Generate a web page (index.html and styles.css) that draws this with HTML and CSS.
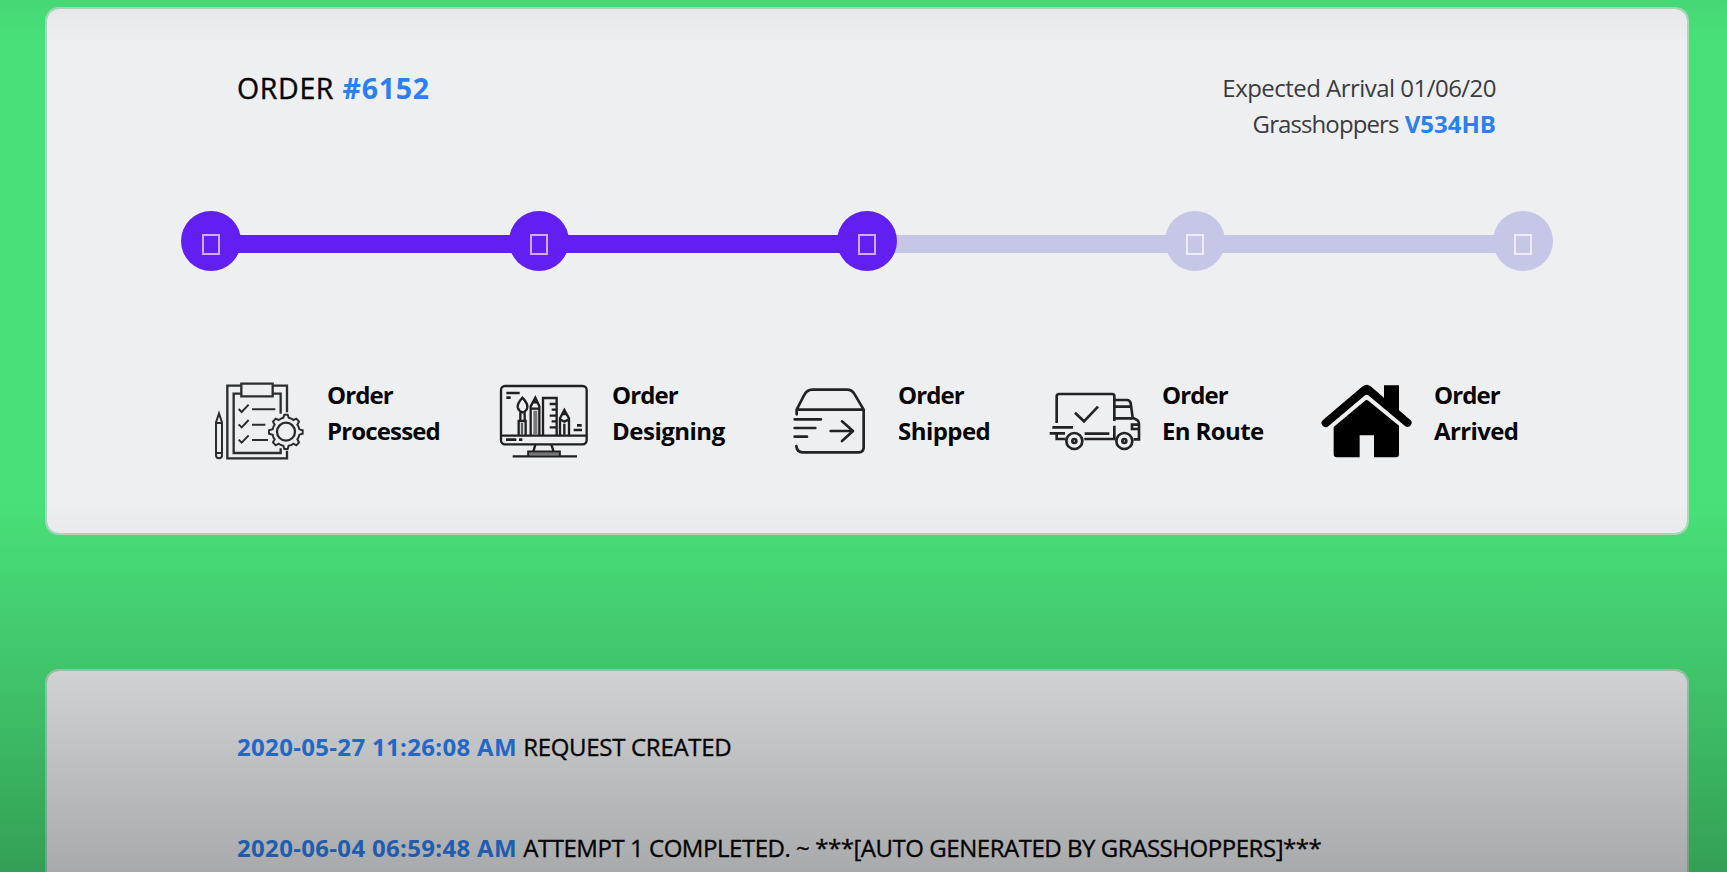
FILE: index.html
```html
<!DOCTYPE html>
<html lang="en">
<head>
<meta charset="utf-8">
<title>Order #6152</title>
<link rel="stylesheet" href="styles.css">
</head>
<body>
<main class="page">
  <section class="card order">
    <header class="order-head">
      <h1 class="order-title"><span class="title-word">ORDER</span> <span class="ref ref-number">#6152</span></h1>
      <div class="order-meta">
        <p class="arrival">Expected Arrival 01/06/20</p>
        <p><span class="carrier">Grasshoppers</span> <span class="ref ref-code">V534HB</span></p>
      </div>
    </header>
    <ol class="track">
      <li class="stop done"><i class="box"></i></li>
      <li class="link done"></li>
      <li class="stop done"><i class="box"></i></li>
      <li class="link done"></li>
      <li class="stop done"><i class="box"></i></li>
      <li class="link"></li>
      <li class="stop"><i class="box"></i></li>
      <li class="link"></li>
      <li class="stop"><i class="box"></i></li>
    </ol>
    <div class="steps">
      <div class="step">
        <svg class="icon" viewBox="30 30 300 270" fill="none" stroke="#2d2d30" stroke-width="7">
          <path d="M122 62H82V280H261V257M218 62H261V142M122 86H101V264H242V250M218 86H242V146"/>
          <path d="M124 56H218V94H124z"/>
          <path d="M116 132l9 9 21-22M116 178l9 9 21-22M116 224l9 9 21-22M156 133H226M156 179H196M156 225H204" stroke-width="6"/>
          <path d="M48 172L57 145L66 172V270Q66 280 57 280Q48 280 48 270zM48 174H66M48 264H66M57 144V156" stroke-width="6"/>
          <path d="M250 158L253 149H263L266 158Q275 160 280 165L289 161L297 170L292 179Q297 185 298 193L308 196V206L298 209Q296 218 292 223L297 232L289 241L280 236Q274 241 266 242L263 252H253L250 242Q241 240 236 236L227 241L219 232L224 223Q219 217 218 209L207 206V196L218 193Q219 185 224 179L219 170L227 161L236 165Q243 160 250 158z" stroke-width="6"/>
          <circle cx="258" cy="200" r="27"/>
        </svg>
        <p class="label"><span class="l-order">Order</span><br><span class="l1">Processed</span></p>
      </div>
      <div class="step">
        <svg class="icon" viewBox="30 30 300 270" fill="none" stroke="#202022" stroke-width="7">
          <rect x="48" y="63" width="257" height="175" rx="12"/>
          <path d="M48 212H305"/>
          <path d="M63 224H94M102 224H112M64 84H104M64 98H77M276 181H290M266 195H291" stroke-width="8"/>
          <path d="M151 239L145 260M199 239L206 260M130 273V260H224V273M83 274H276"/>
          <path d="M132 267H222" stroke="#77777a"/>
          <path d="M112 98Q96 116 98 127Q101 139 112 142Q125 139 127 127Q129 116 112 98zM106 142V166M119 142V166M101 212V168H122V212"/>
          <path d="M111 174V210" stroke="#5c5c5f"/>
          <path d="M137 212V124L151 98L163 124V212M137 131H163"/>
          <path d="M151 137V210" stroke="#77777a" stroke-width="12"/>
          <path d="M144 111H158" stroke-width="9"/>
          <path d="M174 212V99H215V212M194 117H213M200 134H213M194 152H213M200 169H213M194 187H213"/>
          <path d="M225 212V160L238 135L252 160V212M225 163L238 170L252 163M238 176V209M232 147H245"/>
        </svg>
        <p class="label"><span class="l-order">Order</span><br><span class="l2">Designing</span></p>
      </div>
      <div class="step">
        <svg class="icon" viewBox="30 30 300 270" fill="none" stroke="#232326" stroke-width="8" stroke-linecap="round" stroke-linejoin="round">
          <path d="M50 148V134L72 91Q81 74 97 74H201Q216 74 224 88L251 134V247Q251 262 236 262H68Q51 262 49 243M50 134H251"/>
          <path d="M44 163H123M44 189H106M44 215H81M152 198H217M186 169L219 198L186 228"/>
        </svg>
        <p class="label label-shipped"><span class="l-order">Order</span><br><span class="l3">Shipped</span></p>
      </div>
      <div class="step">
        <svg class="icon" viewBox="30 30 300 270" fill="none" stroke="#232326" stroke-width="8">
          <path d="M65 174V94Q65 87 73 87H232Q238 87 238 94V168M238 182V222M44 205H90M52 187H114M65 207V222H91M148 222H240M149 206H223"/>
          <path d="M120 143L147 169L189 125"/>
          <path d="M238 105H276Q284 105 287 114L293 158L308 166Q312 170 312 179V223H296M239 125H287M238 160H294M311 179H291V192H311"/>
          <circle cx="118" cy="228" r="24"/><circle cx="268" cy="228" r="24"/>
          <circle cx="118" cy="228" r="6"/><circle cx="268" cy="228" r="6"/>
        </svg>
        <p class="label"><span class="l-order">Order</span><br><span class="l4">En Route</span></p>
      </div>
      <div class="step">
        <svg class="icon" viewBox="30 30 300 270" fill="#000">
          <path d="M173 64Q185 54 197 64L237 98V61H282V136L317 166Q324 173 316 182Q308 190 300 183L190 91Q185 87 180 91L70 184Q62 190 53 182Q45 173 53 166z"/>
          <path d="M86 186L180 107Q185 103 190 107L282 182V268Q282 277 273 277H207V211H164V277H96Q86 277 86 268z"/>
        </svg>
        <p class="label label-arrived"><span class="l-order">Order</span><br><span class="l5">Arrived</span></p>
      </div>
    </div>
  </section>
  <section class="card log">
    <p class="entry"><span class="time">2020-05-27 11:26:08 AM</span> <span class="note1">REQUEST CREATED</span></p>
    <p class="entry"><span class="time">2020-06-04 06:59:48 AM</span> <span class="note2">ATTEMPT 1 COMPLETED. ~ ***[AUTO GENERATED BY GRASSHOPPERS]***</span></p>
  </section>
</main>
<div class="shade"></div>
</body>
</html>
```
FILE: styles.css
```css
* { box-sizing: border-box; margin: 0; padding: 0; }
html, body { height: 100%; overflow: hidden; }
body {
  background: #49e079;
  color: #050505;
  font: 24px/36px "Open Sans", "Noto Sans", sans-serif;
}
.page {
  display: flex;
  flex-direction: column;
  gap: 134px;
  height: 872px;
  overflow: hidden;
  padding: 7px 38px 0 45px;
}
.card {
  background: #eeeff1;
  border: 2px solid rgba(205, 215, 212, .75);
  background-clip: padding-box;
  border-radius: 14px;
}
.order { flex: none; height: 528px; }
.order-head {
  display: flex;
  justify-content: space-between;
  align-items: flex-start;
  padding: 61px 191px 0 190px;
}
.order-title { margin-top: -2px; font-size: 28.5px; font-weight: 400; line-height: 40px; }
.title-word { letter-spacing: .65px; margin-right: 1px; -webkit-text-stroke: .4px currentColor; }
.ref-number { letter-spacing: .75px; }
.order-meta { text-align: right; color: #3b3b40; }
.arrival { letter-spacing: -.53px; }
.carrier { letter-spacing: -.9px; }
.ref { color: #2b7ff0; font-weight: 700; }
.track {
  display: flex;
  align-items: center;
  list-style: none;
  margin: 69px 134px 0 134px;
}
.stop {
  position: relative;
  z-index: 1;
  flex: none;
  width: 60px;
  height: 60px;
  border-radius: 50%;
  background: #c6c6e7;
  display: flex;
  align-items: center;
  justify-content: center;
}
.link { flex: 1; height: 18px; margin: 5px -4px 0; background: #c6c6e7; }
.done { background: #621ff2; }
.box {
  width: 18px;
  height: 21px;
  margin-top: 6px;
  border: 2px solid #efeaff;
}
.done .box { border-color: #d0a8ff; }
.steps {
  display: grid;
  grid-template-columns: 285px 295px 255px 270px 1fr;
  margin: 104px 0 0 163px;
}
.step { display: flex; align-items: flex-start; gap: 17px; }
.icon { flex: none; width: 100px; height: 90px; }
.label { font-weight: 700; padding-top: 2px; white-space: nowrap; }
.label-shipped { margin-left: -9px; }
.label-arrived { margin-left: 2px; }
.l-order { letter-spacing: -.9px; }
.l1 { letter-spacing: -.85px; }
.l2 { letter-spacing: -.5px; }
.l3 { letter-spacing: -.55px; }
.l4, .l5 { letter-spacing: -.62px; }
.log {
  flex: 1;
  min-height: 0;
  border-bottom: 0;
  border-radius: 14px 14px 0 0;
  padding: 58px 190px 0;
  display: flex;
  flex-direction: column;
  gap: 65px;
}
.entry { height: 36px; white-space: nowrap; }
.time { color: #2b7ff0; font-weight: 700; letter-spacing: .32px; }
.note1, .note2 { -webkit-text-stroke: .35px currentColor; }
.note1 { letter-spacing: -.3px; }
.note2 { letter-spacing: -.46px; }
.shade {
  position: absolute;
  inset: 0;
  background: linear-gradient(rgba(0,0,0,.04), transparent 45px, transparent 500px, rgba(0,0,0,.12) 670px, rgba(0,0,0,.29) 872px);
}
```
